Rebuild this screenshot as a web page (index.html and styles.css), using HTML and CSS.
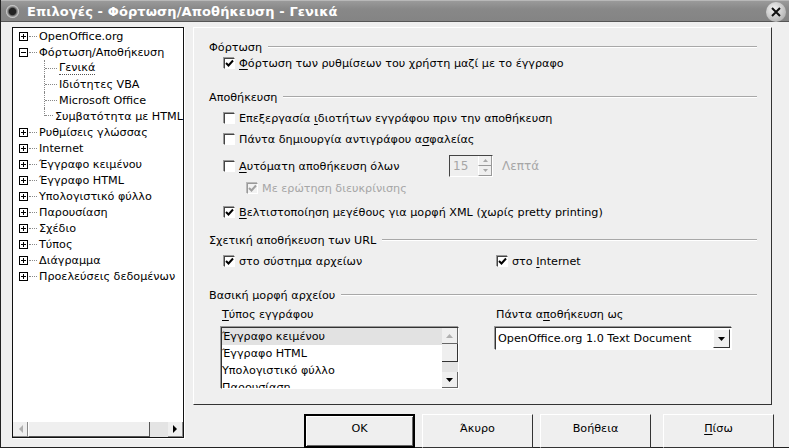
FILE: index.html
```html
<!DOCTYPE html>
<html lang="el">
<head>
    <meta charset="UTF-8">
    <title>Επιλογές - Φόρτωση/Αποθήκευση - Γενικά</title>
    <link rel="stylesheet" href="styles.css">
</head>
<body>
<div class="window">
    <div class="titlebar">
        <span class="app-icon"></span>
        <span class="title">Επιλογές - Φόρτωση/Αποθήκευση - Γενικά</span>
        <span class="close-btn">
            <svg width="12" height="12" viewBox="0 0 12 12"><path d="M2 2 L10 10 M10 2 L2 10" stroke="#111" stroke-width="2"/></svg>
        </span>
    </div>

    <div class="dialog">
        <!-- options tree -->
        <div class="tree">
            <ul class="tree-list">
                <li class="node"><span class="expander plus"></span><span class="stub"></span>OpenOffice.org</li>
                <li class="node"><span class="expander"></span><span class="stub"></span>Φόρτωση/Αποθήκευση</li>
                <li class="child"><span class="branch"></span><span class="focused">Γενικά</span></li>
                <li class="child"><span class="branch"></span>Ιδιότητες VBA</li>
                <li class="child"><span class="branch"></span>Microsoft Office</li>
                <li class="child last"><span class="branch"></span>Συμβατότητα με HTML</li>
                <li class="node"><span class="expander plus"></span><span class="stub"></span>Ρυθμίσεις γλώσσας</li>
                <li class="node"><span class="expander plus"></span><span class="stub"></span>Internet</li>
                <li class="node"><span class="expander plus"></span><span class="stub"></span>Έγγραφο κειμένου</li>
                <li class="node"><span class="expander plus"></span><span class="stub"></span>Έγγραφο HTML</li>
                <li class="node"><span class="expander plus"></span><span class="stub"></span>Υπολογιστικό φύλλο</li>
                <li class="node"><span class="expander plus"></span><span class="stub"></span>Παρουσίαση</li>
                <li class="node"><span class="expander plus"></span><span class="stub"></span>Σχέδιο</li>
                <li class="node"><span class="expander plus"></span><span class="stub"></span>Τύπος</li>
                <li class="node"><span class="expander plus"></span><span class="stub"></span>Διάγραμμα</li>
                <li class="node"><span class="expander plus"></span><span class="stub"></span>Προελεύσεις δεδομένων</li>
            </ul>
            <div class="hscroll">
                <span class="sb-btn"><svg width="5" height="8" viewBox="0 0 5 8"><path d="M5 0 L1 4 L5 8 Z" fill="#b0b0b0"/></svg></span>
                <span class="sb-thumb"></span>
                <span class="sb-track"></span>
                <span class="sb-btn"><svg width="5" height="8" viewBox="0 0 5 8"><path d="M0 0 L4 4 L0 8 Z" fill="#000"/></svg></span>
            </div>
        </div>

        <div class="main">
            <div class="page">
                <div class="group-title"><span>Φόρτωση</span></div>
                <div class="row">
                    <span class="check on"></span><span><u>Φ</u>όρτωση των ρυθμίσεων του χρήστη μαζί με το έγγραφο</span>
                </div>

                <div class="group-title gap-lg"><span>Αποθήκευση</span></div>
                <div class="row gap-sm">
                    <span class="check"></span><span>Επεξεργασία <u>ι</u>διοτήτων εγγράφου πριν την αποθήκευση</span>
                </div>
                <div class="row gap-sm">
                    <span class="check"></span><span>Πάντα δημιουργία αντιγράφου α<u>σ</u>φαλείας</span>
                </div>
                <div class="row spin-row">
                    <span class="autosave"><span class="check"></span><span><u>Α</u>υτόματη αποθήκευση όλων</span></span>
                    <span class="spin">
                        <span class="spin-value">15</span>
                        <span class="spin-btns">
                            <span class="spin-up"><svg width="5" height="3" viewBox="0 0 5 3"><path d="M0 3 L2.5 0 L5 3 Z" fill="#a8a8a8"/></svg></span>
                            <span class="spin-down"><svg width="5" height="3" viewBox="0 0 5 3"><path d="M0 0 L2.5 3 L5 0 Z" fill="#a8a8a8"/></svg></span>
                        </span>
                    </span>
                    <span class="muted minutes">Λεπτά</span>
                </div>
                <div class="row sub-row">
                    <span class="check on disabled"></span><span class="muted">Με ερώτηση διευκρίνισης</span>
                </div>
                <div class="row gap-md">
                    <span class="check on"></span><span><u>Β</u>ελτιστοποίηση μεγέθους για μορφή XML (χωρίς pretty printing)</span>
                </div>

                <div class="group-title gap-url"><span>Σχετική αποθήκευση των URL</span></div>
                <div class="row split gap-sm">
                    <span class="col-a"><span class="check on"></span><span>στο σύστημα αρχείων</span></span>
                    <span class="col-b"><span class="check on"></span><span>στο <u>I</u>nternet</span></span>
                </div>

                <div class="group-title gap-lg"><span>Βασική μορφή αρχείου</span></div>
                <div class="formats">
                    <div class="format-col type-col">
                        <div class="field-label"><u>Τ</u>ύπος εγγράφου</div>
                        <div class="listbox">
                            <ul class="list-items">
                                <li class="selected">Έγγραφο κειμένου</li>
                                <li>Έγγραφο HTML</li>
                                <li>Υπολογιστικό φύλλο</li>
                                <li>Παρουσίαση</li>
                            </ul>
                            <div class="vscroll">
                                <span class="vs-btn"><svg width="7" height="4" viewBox="0 0 7 4"><path d="M0 4 L3.5 0 L7 4 Z" fill="#b0b0b0"/></svg></span>
                                <span class="vs-thumb"></span>
                                <span class="vs-track"></span>
                                <span class="vs-btn"><svg width="7" height="4" viewBox="0 0 7 4"><path d="M0 0 L3.5 4 L7 0 Z" fill="#000"/></svg></span>
                            </div>
                        </div>
                    </div>
                    <div class="format-col">
                        <div class="field-label">Πάντα α<u>π</u>οθήκευση ως</div>
                        <div class="dropdown">
                            <span class="dropdown-value">OpenOffice.org 1.0 Text Document</span>
                            <span class="dropdown-btn"><svg width="7" height="4" viewBox="0 0 7 4"><path d="M0 0 L3.5 4 L7 0 Z" fill="#000"/></svg></span>
                        </div>
                    </div>
                </div>
            </div>

            <div class="buttons">
                <button class="btn default">OK</button>
                <button class="btn">Άκυρο</button>
                <button class="btn">Βοήθεια</button>
                <button class="btn back"><u>Π</u>ίσω</button>
            </div>
        </div>
    </div>
</div>
</body>
</html>
```

FILE: styles.css
```css
body {
    margin: 0;
    width: 789px;
    height: 448px;
    overflow: hidden;
    background: #efefef;
    font-family: "DejaVu Sans", "Noto Sans", sans-serif;
    font-size: 11.2px;
    color: #000;
}

ul {
    list-style: none;
    margin: 0;
    padding: 0;
}

u {
    text-decoration: underline;
    text-underline-offset: 2px;
}

.window {
    width: 788px;
    height: 447px;
    border-left: 1px solid #222;
    border-bottom: 1px solid #222;
    display: flex;
    flex-direction: column;
}

/* title bar */

.titlebar {
    height: 22px;
    box-sizing: border-box;
    background: linear-gradient(#9a9a9a, #888 40%, #848484);
    border-top: 1px solid #b8b8b8;
    border-bottom: 1px solid #555;
    display: flex;
    align-items: center;
    padding-left: 5px;
    padding-right: 3px;
}

.app-icon {
    width: 13px;
    height: 13px;
    border-radius: 50%;
    background: radial-gradient(circle, #222 35%, #666 45%, #ddd 70%, #777 100%);
    margin-right: 8px;
}

.title {
    color: #fff;
    font-weight: bold;
    font-size: 13px;
    letter-spacing: 0.1px;
    flex: 1;
}

.close-btn {
    width: 20px;
    height: 20px;
    border-radius: 50%;
    background: radial-gradient(circle at 40% 35%, #f4f4f4, #b8b8b8 70%, #888);
    display: flex;
    align-items: center;
    justify-content: center;
    margin-top: 2px;
}

.dialog {
    flex: 1;
    display: flex;
    padding: 5px 0 0 11px;
}

/* tree */

.tree {
    width: 172px;
    height: 411px;
    flex: none;
    box-sizing: border-box;
    background: #fff;
    border: 1px solid #111;
    box-shadow: 1px 1px 0 #fff;
    display: flex;
    flex-direction: column;
}

.tree-list {
    flex: 1;
}

.node, .child {
    height: 16px;
    display: flex;
    align-items: center;
    white-space: nowrap;
}

.node {
    padding-left: 6px;
}

.expander {
    width: 9px;
    height: 9px;
    box-sizing: border-box;
    border: 1px solid #000;
    display: flex;
    align-items: center;
    justify-content: center;
    position: relative;
}

.expander::before {
    content: "";
    width: 5px;
    height: 1px;
    background: #000;
}

.expander.plus::after {
    content: "";
    position: absolute;
    width: 1px;
    height: 5px;
    background: #000;
}

.stub {
    width: 8px;
    border-top: 1px dotted #888;
    margin: 0 2px 0 1px;
}

.child {
    padding-left: 31px;
}

.branch {
    width: 12px;
    height: 16px;
    border-left: 1px dotted #888;
    display: flex;
    align-items: center;
    margin-right: 2px;
}

.branch::after {
    content: "";
    flex: 1;
    border-top: 1px dotted #888;
}

.child.last .branch {
    height: 8px;
    align-self: flex-start;
    align-items: flex-end;
}

.focused {
    border-bottom: 1px dotted #555;
    line-height: 13px;
}

.hscroll {
    height: 15px;
    display: flex;
    background: #e4e4e4;
    border-top: 1px solid #fff;
}

.sb-btn {
    width: 15px;
    display: flex;
    align-items: center;
    justify-content: center;
    background: #efefef;
    border-right: 1px solid #888;
    border-bottom: 1px solid #888;
    box-sizing: border-box;
}

.sb-thumb {
    width: 122px;
    background: #efefef;
    border-right: 1px solid #555;
    border-bottom: 1px solid #555;
    border-left: 1px solid #fff;
    box-sizing: border-box;
}

.sb-track {
    flex: 1;
}

/* right side */

.main {
    margin-left: 9px;
    display: flex;
    flex-direction: column;
}

.page {
    width: 579px;
    height: 378px;
    box-sizing: border-box;
    border: 1px solid;
    border-color: #fff #333 #333 #fff;
    padding: 11px 14px 0 15px;
}

.group-title {
    height: 16px;
    display: flex;
    align-items: center;
}

.group-title::after {
    content: "";
    flex: 1;
    margin-left: 6px;
    border-top: 1px solid #a8a8a8;
    border-bottom: 1px solid #fff;
}

.row {
    height: 16px;
    display: flex;
    align-items: center;
    padding-left: 15px;
    white-space: nowrap;
}

.gap-sm { margin-top: 5px; }
.gap-md { margin-top: 8px; }
.gap-lg { margin-top: 18px; }
.gap-url { margin-top: 12px; }

.check {
    width: 11px;
    height: 11px;
    flex: none;
    box-sizing: border-box;
    background: #fff;
    border: 1px solid;
    border-color: #444 #fff #fff #444;
    box-shadow: -1px -1px 0 #999;
    margin-right: 4px;
    display: inline-flex;
}

.check.on {
    background: #fff url("data:image/svg+xml;utf8,<svg xmlns='http://www.w3.org/2000/svg' width='9' height='9'><path d='M1 4 L3.5 6.5 L8 1.5' stroke='black' stroke-width='2' fill='none'/></svg>") no-repeat center;
}

.check.on.disabled {
    background: #f2f2f2 url("data:image/svg+xml;utf8,<svg xmlns='http://www.w3.org/2000/svg' width='9' height='9'><path d='M1 4 L3.5 6.5 L8 1.5' stroke='%23a0a0a0' stroke-width='2' fill='none'/></svg>") no-repeat center;
    border-color: #999 #fff #fff #999;
    box-shadow: -1px -1px 0 #bbb;
}

.muted {
    color: #a6a6a6;
}

.spin-row {
    height: 22px;
    margin-top: 8px;
}

.autosave {
    width: 225px;
    flex: none;
    display: flex;
    align-items: center;
}

.spin {
    width: 44px;
    height: 22px;
    flex: none;
    box-sizing: border-box;
    border: 1px solid;
    border-color: #444 #fff #fff #444;
    display: flex;
}

.spin-value {
    flex: 1;
    color: #a6a6a6;
    font-size: 12px;
    padding-left: 3px;
    display: flex;
    align-items: center;
}

.spin-btns {
    width: 14px;
    display: flex;
    flex-direction: column;
}

.spin-up, .spin-down {
    flex: 1;
    display: flex;
    align-items: center;
    justify-content: center;
    border-left: 1px solid #fff;
    border-right: 1px solid #999;
    border-bottom: 1px solid #999;
}

.minutes {
    margin-left: 9px;
    font-size: 12px;
}

.sub-row {
    margin-top: 3px;
    padding-left: 38px;
}

.split .col-a {
    width: 273px;
    flex: none;
    display: flex;
    align-items: center;
}

.split .col-b {
    display: flex;
    align-items: center;
}

/* file format section */

.formats {
    display: flex;
    margin-top: 4px;
    padding-left: 12px;
}

.format-col {
    flex: 1;
}

.type-col {
    width: 274px;
    flex: none;
}

.field-label {
    height: 16px;
    line-height: 16px;
    padding-left: 1px;
    margin-bottom: 4px;
}

.listbox {
    width: 238px;
    height: 62px;
    box-sizing: border-box;
    background: #fff;
    border: 1px solid;
    border-color: #333 #fff #fff #333;
    box-shadow: -1px -1px 0 #999;
    display: flex;
    overflow: hidden;
}

.list-items {
    flex: 1;
    overflow: hidden;
}

.list-items li {
    height: 17px;
    line-height: 17px;
    white-space: nowrap;
}

.list-items li.selected {
    background: #e2e2e2;
}

.vscroll {
    width: 16px;
    display: flex;
    flex-direction: column;
    background: #e4e4e4;
}

.vs-btn {
    height: 16px;
    box-sizing: border-box;
    display: flex;
    align-items: center;
    justify-content: center;
    background: #efefef;
    border-right: 1px solid #666;
    border-bottom: 1px solid #666;
}

.vs-thumb {
    height: 18px;
    background: #efefef;
    box-sizing: border-box;
    border-right: 1px solid #333;
    border-bottom: 1px solid #333;
}

.vs-track {
    flex: 1;
}

.dropdown {
    width: 237px;
    height: 23px;
    box-sizing: border-box;
    background: #fff;
    border: 1px solid;
    border-color: #333 #fff #fff #333;
    box-shadow: -1px -1px 0 #999;
    display: flex;
    align-items: center;
}

.dropdown-value {
    flex: 1;
    padding-left: 2px;
}

.dropdown-btn {
    width: 17px;
    height: 19px;
    margin-right: 1px;
    box-sizing: border-box;
    background: #efefef;
    border: 1px solid;
    border-color: #fff #333 #333 #fff;
    display: flex;
    align-items: center;
    justify-content: center;
}

/* dialog buttons */

.buttons {
    display: flex;
    margin-top: 9px;
    padding-left: 111px;
    gap: 7px;
}

.btn {
    width: 111px;
    height: 34px;
    box-sizing: border-box;
    background: #efefef;
    border: 1px solid;
    border-color: #fff #333 #333 #fff;
    font-family: inherit;
    font-size: 11.2px;
    padding: 0 0 6px;
}

.btn.default {
    outline: 1px solid #000;
    outline-offset: -1px;
    border-width: 2px;
    border-color: #000;
    box-shadow: inset 1px 1px 0 #fff, inset -1px -1px 0 #666;
}

.btn.back {
    margin-left: 5px;
}
```
